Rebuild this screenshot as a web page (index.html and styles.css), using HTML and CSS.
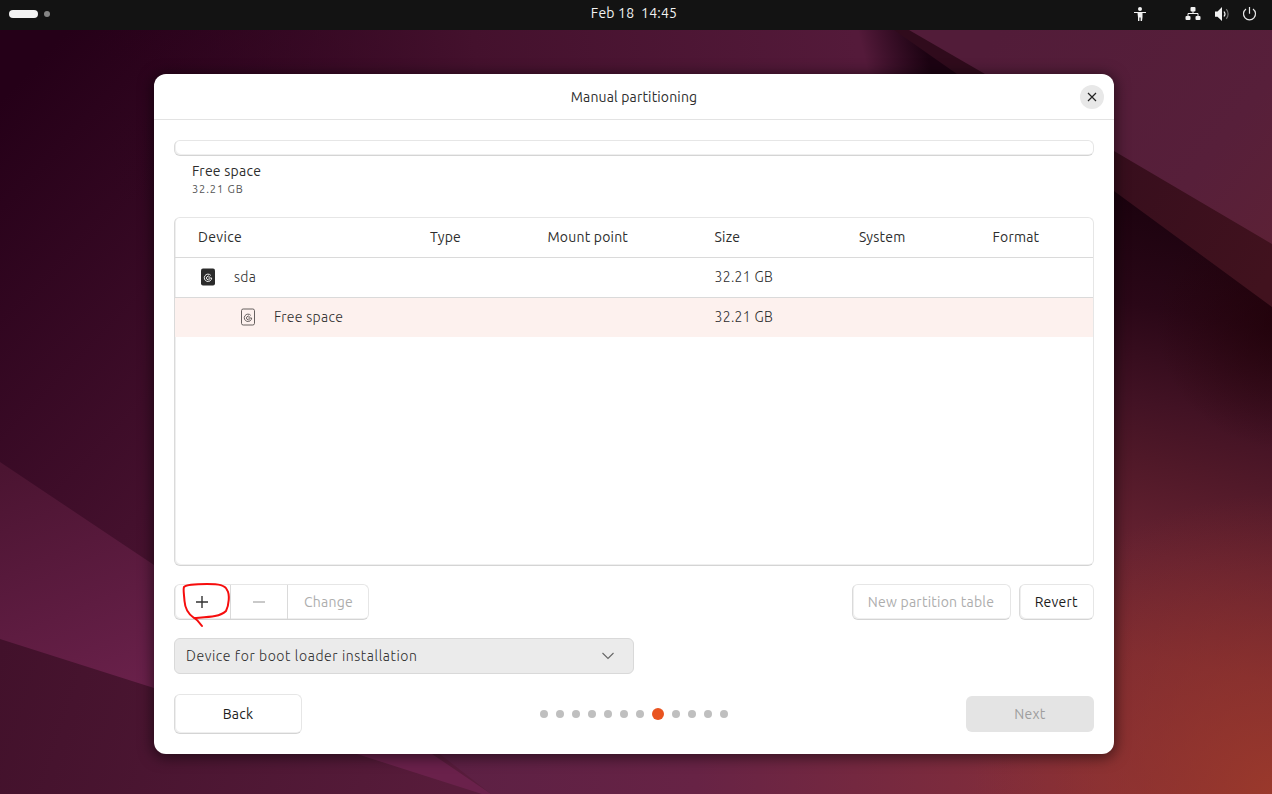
FILE: index.html
```html
<!DOCTYPE html>
<html lang="en">
<head>
<meta charset="utf-8">
<title>Manual partitioning</title>
<link rel="stylesheet" href="styles.css">
</head>
<body>
<div class="desktop">
  <svg class="wallpaper" viewBox="0 0 1272 794" aria-hidden="true">
    <defs>
      <linearGradient id="base" gradientUnits="userSpaceOnUse" x1="0" y1="100" x2="560" y2="640">
        <stop offset="0" stop-color="#250018"/><stop offset=".5" stop-color="#44102d"/><stop offset="1" stop-color="#581c3c"/>
      </linearGradient>
      <linearGradient id="top" gradientUnits="userSpaceOnUse" x1="100" y1="100" x2="850" y2="0">
        <stop offset="0" stop-color="#2a001b" stop-opacity="0"/><stop offset=".5" stop-color="#44112d"/><stop offset="1" stop-color="#541a3a"/>
      </linearGradient>
      <linearGradient id="band" gradientUnits="userSpaceOnUse" x1="0" y1="470" x2="100" y2="710">
        <stop offset="0" stop-color="#4b1431"/><stop offset="1" stop-color="#6a214b"/>
      </linearGradient>
      <linearGradient id="low" gradientUnits="userSpaceOnUse" x1="0" y1="650" x2="450" y2="794">
        <stop offset="0" stop-color="#42112b"/><stop offset="1" stop-color="#581c3b"/>
      </linearGradient>
      <linearGradient id="glow" gradientUnits="userSpaceOnUse" x1="1215" y1="210" x2="1100" y2="794">
        <stop offset="0" stop-color="#1b020e"/><stop offset=".18" stop-color="#2a0717"/><stop offset=".34" stop-color="#421224"/><stop offset=".43" stop-color="#4f1828"/><stop offset=".59" stop-color="#662231"/><stop offset=".76" stop-color="#7c2b34"/><stop offset="1" stop-color="#8a3038"/>
      </linearGradient>
      <radialGradient id="ember" gradientUnits="userSpaceOnUse" cx="1272" cy="794" r="300">
        <stop offset="0" stop-color="#9c3a2a" stop-opacity=".9"/><stop offset="1" stop-color="#8c3028" stop-opacity="0"/>
      </radialGradient>
      <radialGradient id="corner" gradientUnits="userSpaceOnUse" cx="1285" cy="320" r="130">
        <stop offset="0" stop-color="#1f0006" stop-opacity=".7"/><stop offset="1" stop-color="#250308" stop-opacity="0"/>
      </radialGradient>
      <linearGradient id="foot" gradientUnits="userSpaceOnUse" x1="440" y1="0" x2="1112" y2="0">
        <stop offset="0" stop-color="#5c2044"/><stop offset=".38" stop-color="#672345"/><stop offset="1" stop-color="#893038"/>
      </linearGradient>
      <linearGradient id="panel" gradientUnits="userSpaceOnUse" x1="1000" y1="30" x2="1272" y2="244">
        <stop offset="0" stop-color="#521c39"/><stop offset=".7" stop-color="#571f3a"/><stop offset="1" stop-color="#5c2136"/>
      </linearGradient>
      <linearGradient id="fold" gradientUnits="userSpaceOnUse" x1="1000" y1="80" x2="1272" y2="270">
        <stop offset="0" stop-color="#300b1c"/><stop offset="1" stop-color="#41121e"/>
      </linearGradient>
      <linearGradient id="shade" gradientUnits="userSpaceOnUse" x1="865" y1="60" x2="925" y2="45">
        <stop offset="0" stop-color="#180010" stop-opacity="0"/><stop offset="1" stop-color="#1c0312"/>
      </linearGradient>
    </defs>
    <rect width="1272" height="794" fill="url(#base)"/>
    <rect width="1000" height="200" fill="url(#top)"/>
    <path d="M0 639L154 688L357 754L482 794H0Z" fill="url(#low)"/>
    <path d="M0 462L154 565L432 754L491 794H482L357 754L154 688L0 639Z" fill="url(#band)"/>
    <path d="M422 740H1112V794H491Z" fill="url(#foot)"/>
    <path d="M1080 150L1272 290V794H1110V740H1080Z" fill="url(#glow)"/>
    <path d="M1112 480H1272V794H972V740H1112Z" fill="url(#ember)"/>
    <path d="M1114 180H1272V480H1114Z" fill="url(#corner)"/>
    <path d="M800 30H900L1114 191V200H800Z" fill="url(#shade)"/>
    <path d="M894 30L957 74L1114 191L1272 307V230L911 20Z" fill="url(#fold)"/>
    <path d="M909 30L985 74L1114 151L1272 244V30Z" fill="url(#panel)"/>
  </svg>

  <header class="topbar">
    <div class="workspaces"><span class="pill"></span><span class="spot"></span></div>
    <time class="clock">Feb 18&nbsp; 14:45</time>
    <div class="tray">
      <svg class="tray-person" viewBox="0 0 14 16"><circle cx="7" cy="3" r="2" /><path d="M1 6h12v1H9.500v4.200L9 15H7.600v-3.500H6.400V15H5v-3.800L4.500 7H1z"/></svg>
      <svg class="tray-net" viewBox="0 0 16 16"><rect x="5.500" y="1" width="5" height="4.400" rx="1"/><rect x=".5" y="10" width="5" height="4" rx="1"/><rect x="10.500" y="10" width="5" height="4" rx="1"/><path d="M8 5v2.500M3 10.500v-3h10v3" fill="none" stroke="#f2f2f2"/></svg>
      <svg class="tray-vol" viewBox="0 0 16 16"><path d="M1 5.500h2.500L8 1v14L3.500 10.800H1z"/><path d="M10 5.500q2 2.500 0 5" fill="none" stroke="#f2f2f2" stroke-width="1.200"/><path d="M12.300 3.200q3.600 4.800 0 9.600" fill="none" stroke="#777" stroke-width="1.200"/></svg>
      <svg class="tray-power" viewBox="0 0 16 16"><path d="M4 3A6 6 0 1 0 11 3M7.500 1v6.800" fill="none" stroke="#e8e8e8" stroke-width="1.200"/></svg>
    </div>
  </header>

  <main class="window">
    <div class="titlebar">
      <h1 class="title">Manual partitioning</h1>
      <button class="close" aria-label="Close"><svg class="close-icon" viewBox="0 0 10 10"><path d="M1 1l8 8M9 1L1 9"/></svg></button>
    </div>
    <div class="content">
      <div class="diskbar"></div>
      <div class="legend">
        <div class="legend-name">Free space</div>
        <div class="legend-size">32.21 GB</div>
      </div>

      <section class="table">
        <div class="row head">
          <span class="h-device">Device</span><span>Type</span><span>Mount point</span><span>Size</span><span>System</span><span>Format</span>
        </div>
        <div class="row">
          <span class="device"><svg class="disk" viewBox="0 0 16 18"><rect x="1" y=".5" width="14" height="17" rx="2" fill="#2b2b2b"/><path d="M10.800 7.400A3.700 3.700 0 1 0 11.700 10H8.300M9.700 8.900A1.800 1.800 0 1 0 9.700 11.100" class="disk-mark light"/></svg><span>sda</span></span>
          <span></span><span></span><span>32.21 GB</span>
        </div>
        <div class="row selected">
          <span class="device child"><svg class="disk" viewBox="0 0 16 18"><rect x="1.500" y="1" width="13" height="16" rx="1.700" fill="none" stroke="#66605f"/><path d="M10.800 7.400A3.700 3.700 0 1 0 11.700 10H8.300M9.700 8.900A1.800 1.800 0 1 0 9.700 11.100" class="disk-mark"/></svg><span>Free space</span></span>
          <span></span><span></span><span>32.21 GB</span>
        </div>
      </section>

      <div class="actions">
        <div class="group">
          <button class="tool add" aria-label="Add"><svg class="sign" viewBox="0 0 12 12"><path d="M6 0v12M0 6h12"/></svg>
            <svg class="scribble" viewBox="0 0 50 48"><path d="M3 5C5 3 17 2 26 2C38 2 44 3 46 8C49 12 48 23 45 29C39 35 27 35 13 36C7 32 4 26 3.500 19C3 12 2 7 3 5M12 35C17 38 19 41 21 44"/></svg></button>
          <button class="tool remove off" aria-label="Remove"><svg class="sign" viewBox="0 0 12 12"><path d="M0 6h12"/></svg></button>
          <button class="tool change off">Change</button>
        </div>
        <div class="right">
          <button class="btn newtable off">New partition table</button>
          <button class="btn revert">Revert</button>
        </div>
      </div>

      <div class="select"><span>Device for boot loader installation</span><svg class="chevron" viewBox="0 0 12 8"><path d="M.5 1L6 6.500L11.500 1"/></svg></div>

      <footer class="footer">
        <button class="btn back">Back</button>
        <div class="dots"><i class="dot"></i><i class="dot"></i><i class="dot"></i><i class="dot"></i><i class="dot"></i><i class="dot"></i><i class="dot"></i><i class="dot active"></i><i class="dot"></i><i class="dot"></i><i class="dot"></i><i class="dot"></i></div>
        <button class="next">Next</button>
      </footer>
    </div>
  </main>
</div>
</body>
</html>
```
FILE: styles.css
```css
* { box-sizing: border-box; }
body { margin: 0; font: 14px/20px Ubuntu, "Noto Sans", sans-serif; color: #2d2d2d; letter-spacing: .24px; }
button { font: inherit; color: inherit; background: none; border: 0; padding: 0; margin: 0; letter-spacing: inherit; }
svg { display: block; }
.desktop { position: relative; width: 1272px; height: 794px; overflow: hidden; display: flex; flex-direction: column; align-items: center; }
.wallpaper { position: absolute; inset: 0; width: 1272px; height: 794px; }

.topbar { position: relative; width: 100%; height: 30px; flex: none; background: #131313; color: #f2f2f2; display: grid; grid-template-columns: 1fr auto 1fr; align-items: center; }
.workspaces { display: flex; align-items: center; gap: 6px; padding: 0 0 2px 9px; }
.pill { width: 29px; height: 8px; border-radius: 4px; background: #f2f2f2; }
.spot { width: 6px; height: 6px; border-radius: 50%; background: #858585; }
.clock { padding: 0 4px 4px 0; letter-spacing: .2px; }
.tray { display: flex; justify-content: flex-end; align-items: center; padding: 0 14px 2px 0; fill: #f2f2f2; }
.tray-person { width: 14px; height: 16px; margin-right: 38px; }
.tray-net { width: 16px; height: 16px; margin-right: 13px; }
.tray-vol { width: 16px; height: 16px; margin-right: 12px; }
.tray-power { width: 16px; height: 16px; }

.window { position: relative; width: 960px; height: 680px; margin: 44px 4px 0 0; background: #fff; border-radius: 12px; box-shadow: 0 2px 14px 2px rgba(0,0,0,.5); }
.titlebar { height: 46px; border-bottom: 1px solid #e3e3e3; display: grid; grid-template-columns: 1fr auto 1fr; align-items: center; padding: 0 10px; }
.title { grid-column: 2; margin: 0; font-size: 14px; font-weight: 400; letter-spacing: .16px; }
.close { justify-self: end; width: 24px; height: 24px; border-radius: 50%; background: #e8e8e8; display: grid; place-items: center; }
.close-icon { width: 10px; height: 10px; stroke: #222; stroke-width: 1.2; }
.content { padding: 20px 20px 0; display: flex; flex-direction: column; }

.diskbar, .table, .group, .btn { border: 1px solid #e6e6e6; border-left-color: #dadada; border-bottom-color: #d4d4d4; border-radius: 6px; box-shadow: inset 1px -1px 0 #efefef; }
.diskbar { height: 16px; }
.legend { padding: 5px 18px 0; height: 61px; }
.legend-name { line-height: 20px; }
.legend-size { font-size: 11px; line-height: 16px; color: #555; letter-spacing: .9px; }

.table { height: 349px; overflow: hidden; }
.row { height: 40px; display: grid; grid-template-columns: 232px 117.5px 167px 144.5px 133.5px 1fr; align-items: center; padding: 0 0 1px 23px; border-bottom: 1px solid #dadada; font-weight: 300; letter-spacing: .32px; }
.head { font-weight: 400; letter-spacing: .2px; }
.h-device { letter-spacing: .35px; }
.selected { height: 39px; background: #fdf1ee; border: 0; }
.device { display: flex; align-items: center; gap: 18px; padding-left: 2px; }
.child { padding-left: 42px; }
.disk { width: 16px; height: 18px; }
.disk-mark { fill: none; stroke: #66605f; stroke-width: 1; }
.light { stroke: #eee; }

.actions { display: flex; justify-content: space-between; margin-top: 18px; height: 36px; }
.group { display: flex; }
.tool { border-left: 1px solid #dadada; display: grid; place-items: center; }
.add { position: relative; width: 55px; border-left: 0; padding-right: 1px; }
.remove { width: 57px; }
.change { width: 81px; padding-left: 1px; }
.sign { width: 12px; height: 12px; stroke: #333; stroke-width: 1.4; }
.off { color: #adadad; }
.off .sign { stroke: #b2b2b2; }
.scribble { position: absolute; left: 6px; top: -3px; width: 50px; height: 48px; fill: none; stroke: #f60d0d; stroke-width: 2; stroke-linecap: round; z-index: 1; }
.right { display: flex; gap: 8px; }
.newtable { width: 159px; }
.revert { width: 75.5px; color: #1c1c1c; }
.select { width: 460px; height: 36px; margin-top: 18px; background: #ebebeb; border: 1px solid #d9d9d9; border-radius: 6px; display: flex; align-items: center; justify-content: space-between; padding: 0 19px 0 11px; font-weight: 300; letter-spacing: .59px; }
.chevron { width: 12px; height: 8px; fill: none; stroke: #666; stroke-width: 1.1; }
.footer { display: grid; grid-template-columns: 128px 1fr 128px; align-items: center; margin-top: 20px; height: 40px; }
.back { height: 40px; color: #1c1c1c; }
.next { height: 36px; border-radius: 6px; background: #e4e4e4; color: #9e9e9e; }
.dots { display: flex; justify-content: center; align-items: center; gap: 8px; }
.dot { width: 8px; height: 8px; border-radius: 50%; background: #bfbfbf; }
.active { width: 12px; height: 12px; background: #e95420; }
```
